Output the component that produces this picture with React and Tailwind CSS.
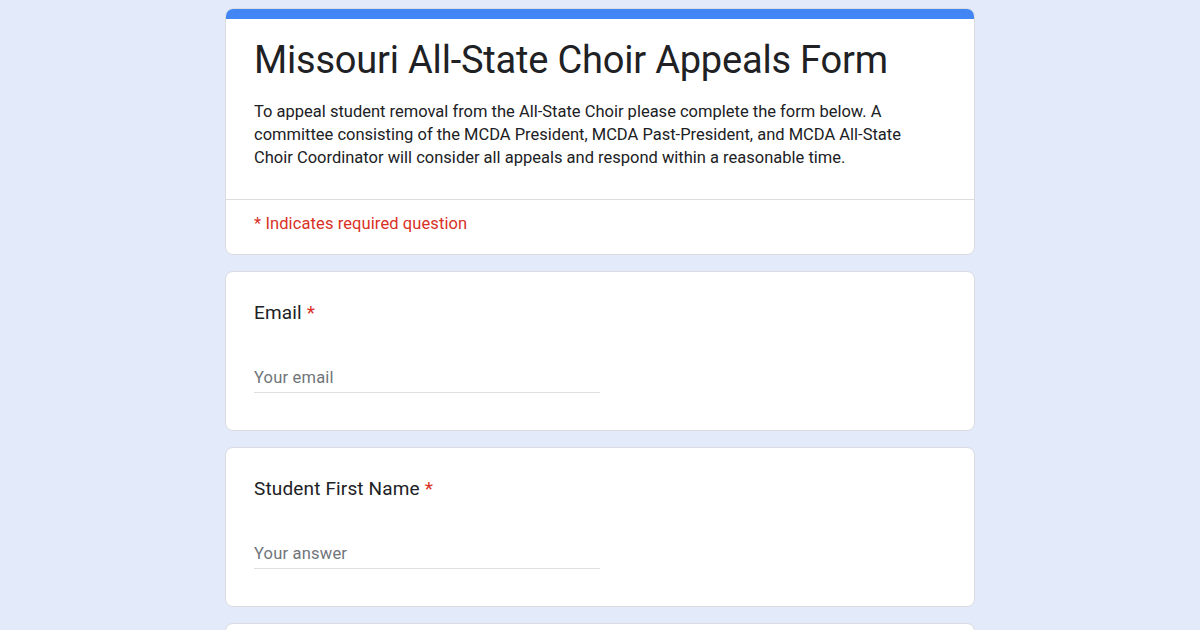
import React from 'react';

function Question({ label, placeholder }) {
  return (
    <section className="rounded-lg border border-[#dadce0] bg-white pl-[28px] pr-6 pt-[26px] pb-[37px]">
      <div className="text-[19px] leading-[30px] text-[#202124] tracking-[0.15px]">
        {label} <span className="text-[#d93025]">*</span>
      </div>
      <div className="mt-[37px] w-[346px] border-b border-[#e0e0e0] pb-[1px] text-[16.5px] leading-[26px] text-[#70757a] tracking-[0.2px]">
        {placeholder}
      </div>
    </section>
  );
}

export default function App() {
  return (
    <div
      className="min-h-screen bg-[#e3ebfb] pt-[8px]"
      style={{ fontFamily: 'Roboto, "Liberation Sans", sans-serif' }}
    >
      <div className="mx-auto flex w-[750px] flex-col gap-[16px]">
        <section className="overflow-hidden rounded-lg border border-[#dadce0] bg-white">
          <div className="h-[10px] bg-[#4285f4]" />
          <div className="px-[28px] pt-[17px] pb-[30px]">
            <h1 className="text-[38px] leading-[48px] text-[#202124] tracking-[-0.2px]">
              Missouri All-State Choir Appeals Form
            </h1>
            <p className="mt-[16px] max-w-[668px] text-[16.5px] leading-[23px] text-[#202124]">
              To appeal student removal from the All-State Choir please complete the form below. A
              committee consisting of the MCDA President, MCDA Past-President, and MCDA All-State
              Choir Coordinator will consider all appeals and respond within a reasonable time.
            </p>
          </div>
          <div className="border-t border-[#dadce0] px-[28px] pt-[13px] pb-[19px] text-[16.5px] leading-[22px] text-[#d93025] tracking-[0.1px]">
            * Indicates required question
          </div>
        </section>
        <Question label="Email" placeholder="Your email" />
        <Question label="Student First Name" placeholder="Your answer" />
        <Question label="Student Last Name" placeholder="Your answer" />
      </div>
    </div>
  );
}
